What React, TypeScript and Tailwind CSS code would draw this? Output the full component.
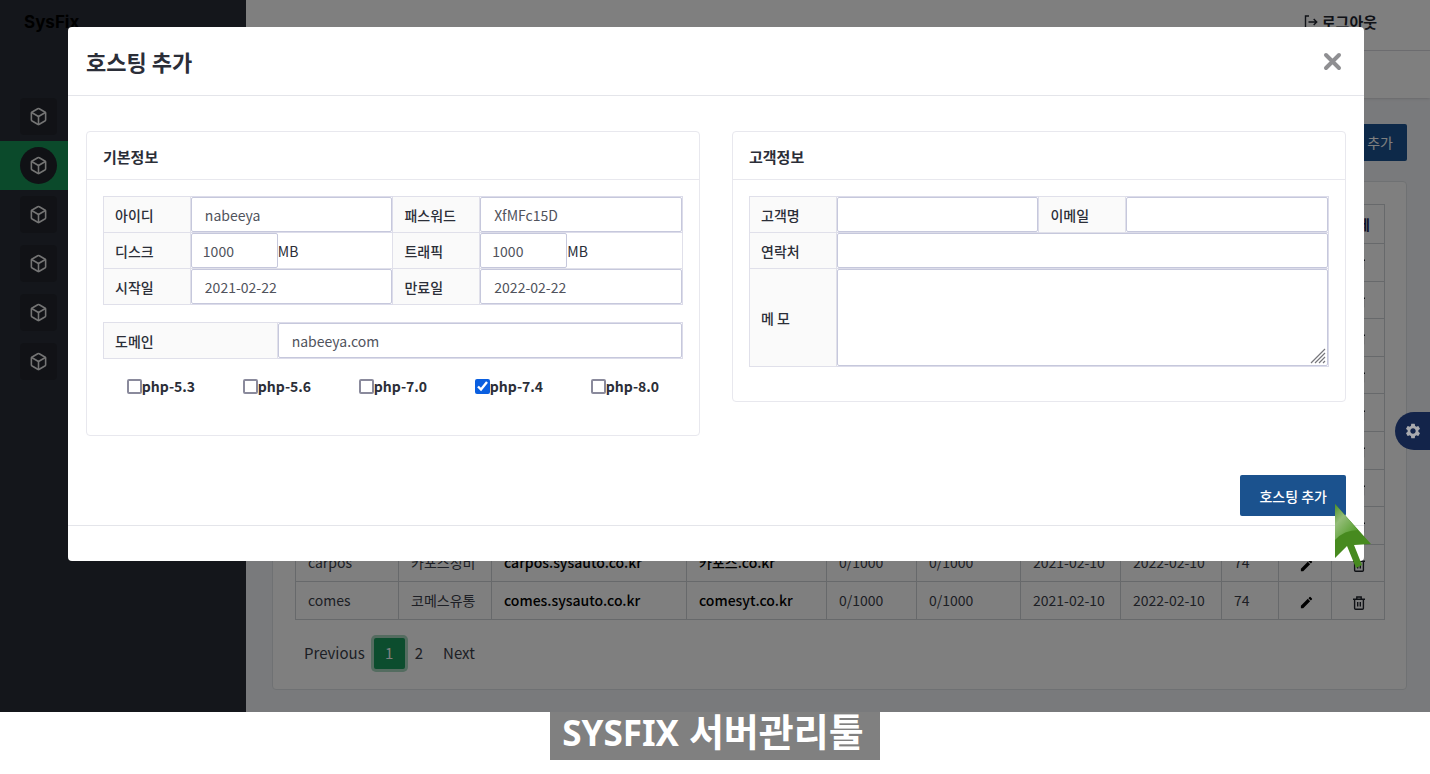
import type { ReactNode } from 'react';
import { Box } from 'lucide-react';
import { MdEdit, MdSettings } from 'react-icons/md';

const menuItems = [0, 1, 2, 3, 4, 5];
const activeMenu = 1;

const columnWidths = [103, 93, 195, 140, 90, 104, 100, 101, 57, 53, 53];

const emptyRow = ['', '', '', '', '', '', '', '', ''];

const rows = [
  ...Array.from({ length: 8 }, () => emptyRow),
  ['carpos', '카포스정비', 'carpos.sysauto.co.kr', '카포스.co.kr', '0/1000', '0/1000', '2021-02-10', '2022-02-10', '74'],
  ['comes', '코메스유통', 'comes.sysauto.co.kr', 'comesyt.co.kr', '0/1000', '0/1000', '2021-02-10', '2022-02-10', '74'],
];

const phpVersions = ['5.3', '5.6', '7.0', '7.4', '8.0'];

function LogoutIcon() {
  return (
    <svg width="14" height="14" viewBox="0 0 14 14" fill="none" stroke="currentColor" strokeWidth="1.4" aria-hidden>
      <path d="M5 1H1.5v12H5M4.5 7h8M9.7 4l3 3-3 3" />
    </svg>
  );
}

function TrashIcon() {
  return (
    <svg width="12" height="14" viewBox="0 0 12 14" fill="none" stroke="currentColor" strokeWidth="1.4" aria-hidden>
      <path d="M0 3.2h12M3.8 3V1h4.4v2M1.6 3.4v8.8q0 1 1 1h6.8q1 0 1-1V3.4M4.7 6v4.6M7.3 6v4.6" />
    </svg>
  );
}

function Sidebar() {
  return (
    <aside className="w-[246px] shrink-0 bg-[#292d36]">
      <div className="px-6 pt-2.5 font-[Inter,sans-serif] text-[17px] leading-6 font-bold text-black">SysFix</div>
      <nav className="mt-[58px]">
        {menuItems.map((item) => (
          <a
            key={item}
            href="#"
            aria-label="menu"
            className={item === activeMenu ? 'flex h-[49px] items-center bg-[#169456] pl-5' : 'flex h-[49px] items-center pl-5'}
          >
            <span
              className={
                item === activeMenu
                  ? 'flex size-[37px] items-center justify-center rounded-full bg-[#20232a] text-[#e8e8e8]'
                  : 'flex size-[37px] items-center justify-center rounded-sm bg-[#22252d] text-[#e8e8e8]'
              }
            >
              <Box size={19} strokeWidth={2} />
            </span>
          </a>
        ))}
      </nav>
    </aside>
  );
}

function HostingTable() {
  return (
    <table className="h-[416px] w-full table-fixed border-collapse text-left text-sm leading-5 text-[#3b3f4a]">
      <colgroup>
        {columnWidths.map((width, i) => (
          <col key={i} style={{ width }} />
        ))}
      </colgroup>
      <thead>
        <tr className="h-[39px]">
          {columnWidths.map((_, i) => (
            <th key={i} className="border border-[#cfd3d6] px-3 whitespace-nowrap text-[#1b2850]">
              {i === 10 ? '삭제' : ''}
            </th>
          ))}
        </tr>
      </thead>
      <tbody>
        {rows.map((row, r) => (
          <tr key={r} className="h-[37px]">
            {row.map((cell, c) => (
              <td
                key={c}
                className={
                  c === 2 || c === 3
                    ? 'border border-[#cfd3d6] px-3 pb-0.5 font-medium whitespace-nowrap text-black'
                    : 'border border-[#cfd3d6] px-3 pb-0.5 whitespace-nowrap'
                }
              >
                {cell}
              </td>
            ))}
            <td className="border border-[#cfd3d6] pt-1 pl-0.5">
              <button type="button" aria-label="edit" className="mx-auto block text-black">
                <MdEdit size={15} />
              </button>
            </td>
            <td className="border border-[#cfd3d6] pt-1 pl-0.5">
              <button type="button" aria-label="delete" className="mx-auto block text-[#20242c]">
                <TrashIcon />
              </button>
            </td>
          </tr>
        ))}
      </tbody>
    </table>
  );
}

function Page() {
  return (
    <div className="flex">
      <Sidebar />
      <div className="min-w-0 flex-1 bg-[#f3f4f8]">
        <header className="flex h-[51px] justify-end border-b border-[#dcdde2] bg-white pt-3 pr-[53px]">
          <a href="#" className="flex h-5 items-center gap-1 text-[15px] font-bold text-[#20242e]">
            <LogoutIcon />
            로그아웃
          </a>
        </header>
        <div className="h-[47px] bg-white shadow-sm" />
        <main className="pt-[26px] pr-[23px] pb-[22px] pl-[26px]">
          <div className="mb-5 flex justify-end">
            <button type="button" className="h-[37px] rounded-xs bg-[#1b5392] px-3.5 pb-0.5 text-sm text-white">
              호스팅 추가
            </button>
          </div>
          <section className="rounded border border-[#dfe3e6] bg-white px-[22px] pt-[22px] pb-5">
            <HostingTable />
            <div className="mt-[18px] flex items-center text-[15px] text-[#3b3f4a]">
              <a href="#" className="px-[9px]">Previous</a>
              <a
                href="#"
                className="flex size-[31px] items-center justify-center rounded-xs bg-[#199a5c] text-white ring-3 ring-[#a9d8c1]"
              >
                1
              </a>
              <a href="#" className="px-2.5">2</a>
              <a href="#" className="px-2.5">Next</a>
            </div>
          </section>
        </main>
      </div>
    </div>
  );
}

function Card({ title, children }: { title: string; children: ReactNode }) {
  return (
    <section className="rounded border border-[#e8e8ee] bg-white">
      <h3 className="flex h-12 items-center border-b border-[#e8e8ee] px-4 pt-1 text-[15px] font-bold">{title}</h3>
      <div className="px-4 pt-4">{children}</div>
    </section>
  );
}

function Label({ id, children }: { id: string; children: ReactNode }) {
  return (
    <th className="border border-[#e0e0ea] bg-[#fafafa] px-[11px] text-left text-sm font-medium">
      <label htmlFor={id}>{children}</label>
    </th>
  );
}

function Field({ id, value, colSpan }: { id: string; value?: string; colSpan?: number }) {
  return (
    <td colSpan={colSpan} className="border border-[#dcdcea]">
      <input
        id={id}
        defaultValue={value}
        className="block h-[35px] w-full rounded-xs border border-[#c6c8dc] px-[13px] text-sm text-[#50535c]"
      />
    </td>
  );
}

function SizeField({ id, value }: { id: string; value: string }) {
  return (
    <td className="border border-[#e0e0ea]">
      <div className="flex items-center text-sm">
        <input
          id={id}
          defaultValue={value}
          className="block h-[35px] w-[87px] rounded-xs border border-[#c6c8dc] px-[11px] text-sm text-[#50535c]"
        />
        MB
      </div>
    </td>
  );
}

function BasicInfo() {
  return (
    <Card title="기본정보">
      <table className="w-full table-fixed border-collapse">
        <colgroup>
          <col className="w-[15%]" />
          <col className="w-[35%]" />
          <col className="w-[15%]" />
          <col className="w-[35%]" />
        </colgroup>
        <tbody>
          <tr>
            <Label id="user">아이디</Label>
            <Field id="user" value="nabeeya" />
            <Label id="password">패스워드</Label>
            <Field id="password" value="XfMFc15D" />
          </tr>
          <tr>
            <Label id="disk">디스크</Label>
            <SizeField id="disk" value="1000" />
            <Label id="traffic">트래픽</Label>
            <SizeField id="traffic" value="1000" />
          </tr>
          <tr>
            <Label id="start">시작일</Label>
            <Field id="start" value="2021-02-22" />
            <Label id="end">만료일</Label>
            <Field id="end" value="2022-02-22" />
          </tr>
        </tbody>
      </table>
      <table className="mt-[17px] w-full table-fixed border-collapse">
        <colgroup>
          <col className="w-[30%]" />
          <col className="w-[70%]" />
        </colgroup>
        <tbody>
          <tr>
            <Label id="domain">도메인</Label>
            <Field id="domain" value="nabeeya.com" />
          </tr>
        </tbody>
      </table>
      <div className="mt-[17px] mb-[39px] grid grid-cols-5">
        {phpVersions.map((version) => (
          <label key={version} className="flex items-center justify-center text-sm font-bold">
            <input
              type="checkbox"
              defaultChecked={version === '7.4'}
              className="size-[15px] appearance-none rounded-xs border-2 border-[#8a8a9c] accent-[#0a5fe0] checked:appearance-auto"
            />
            php-{version}
          </label>
        ))}
      </div>
    </Card>
  );
}

function CustomerInfo() {
  return (
    <Card title="고객정보">
      <table className="mb-[34px] w-full table-fixed border-collapse">
        <colgroup>
          <col className="w-[15%]" />
          <col className="w-[35%]" />
          <col className="w-[15%]" />
          <col className="w-[35%]" />
        </colgroup>
        <tbody>
          <tr>
            <Label id="customer">고객명</Label>
            <Field id="customer" />
            <Label id="email">이메일</Label>
            <Field id="email" />
          </tr>
          <tr>
            <Label id="phone">연락처</Label>
            <Field id="phone" colSpan={3} />
          </tr>
          <tr>
            <Label id="memo">메 모</Label>
            <td colSpan={3} className="border border-[#dcdcea]">
              <div className="relative">
                <textarea
                  id="memo"
                  className="block h-[97px] w-full resize-none rounded-xs border border-[#c6c8dc] px-[13px] py-1.5 text-sm"
                />
                <svg
                  width="16"
                  height="16"
                  viewBox="0 0 16 16"
                  stroke="#77777c"
                  strokeWidth="1.2"
                  className="absolute right-0.5 bottom-0.5"
                  aria-hidden
                >
                  <path d="M1 15 15 1M5 15 15 5M9 15l6-6M13 15l2-2" />
                </svg>
              </div>
            </td>
          </tr>
        </tbody>
      </table>
    </Card>
  );
}

function HostingModal() {
  return (
    <div role="dialog" aria-label="호스팅 추가" className="rounded bg-white text-[#2b2e38]">
      <div className="flex h-[69px] items-center justify-between border-b border-[#e4e5ea] pr-[22px] pl-[18px]">
        <h2 className="text-[22px] font-bold">호스팅 추가</h2>
        <button type="button" aria-label="close">
          <svg width="19" height="19" viewBox="0 0 19 19" stroke="#8f8f92" strokeWidth="4" strokeLinecap="round">
            <path d="M3 3l13 13M16 3 3 16" />
          </svg>
        </button>
      </div>
      <div className="px-[18px] pt-[35px] pb-[9px]">
        <div className="grid grid-cols-2 items-start gap-8">
          <BasicInfo />
          <CustomerInfo />
        </div>
        <div className="mt-[39px] flex justify-end">
          <button type="button" className="h-[41px] rounded-xs bg-[#1b528e] px-[19px] text-sm font-medium text-white">
            호스팅 추가
          </button>
        </div>
      </div>
      <div className="h-9 border-t border-[#e4e5ea]" />
    </div>
  );
}

function Cursor() {
  return (
    <svg width="36" height="66" viewBox="0 0 36 66" className="absolute top-[504px] right-[59px]" aria-hidden>
      <defs>
        <linearGradient id="cursor-light" x1="0" y1="0" x2="0.7" y2="1">
          <stop offset="0" stopColor="#4c8f27" />
          <stop offset="0.4" stopColor="#94bd78" />
          <stop offset="1" stopColor="#4f9a27" />
        </linearGradient>
      </defs>
      <path d="M0 0v54l12-12 9 22 6-3-8-20 17-1z" fill="#478a1f" />
      <path d="M0 0v36Q9 26 23 26z" fill="url(#cursor-light)" />
    </svg>
  );
}

export default function App() {
  return (
    <div className="min-h-screen bg-white font-['Noto_Sans_CJK_KR',sans-serif]">
      <div className="relative">
        <Page />
        <div className="absolute inset-0 bg-black/50 pt-[27px] pr-[66px] pl-[68px]">
          <HostingModal />
        </div>
        <button
          type="button"
          aria-label="settings"
          className="absolute top-[412px] right-0 flex h-[38px] w-[35px] items-center justify-center rounded-l-full bg-[#13244a] text-[#a9aaae]"
        >
          <MdSettings size={18} />
        </button>
        <Cursor />
      </div>
      <div className="flex justify-center">
        <p className="bg-[#808080] pr-4 pb-2 pl-3 text-[38px] leading-[38px] font-bold text-white font-['Noto_Sans','Noto_Sans_CJK_KR',sans-serif]">
          <span className="text-[35px]">SYSFIX</span> 서버관리툴
        </p>
      </div>
    </div>
  );
}
